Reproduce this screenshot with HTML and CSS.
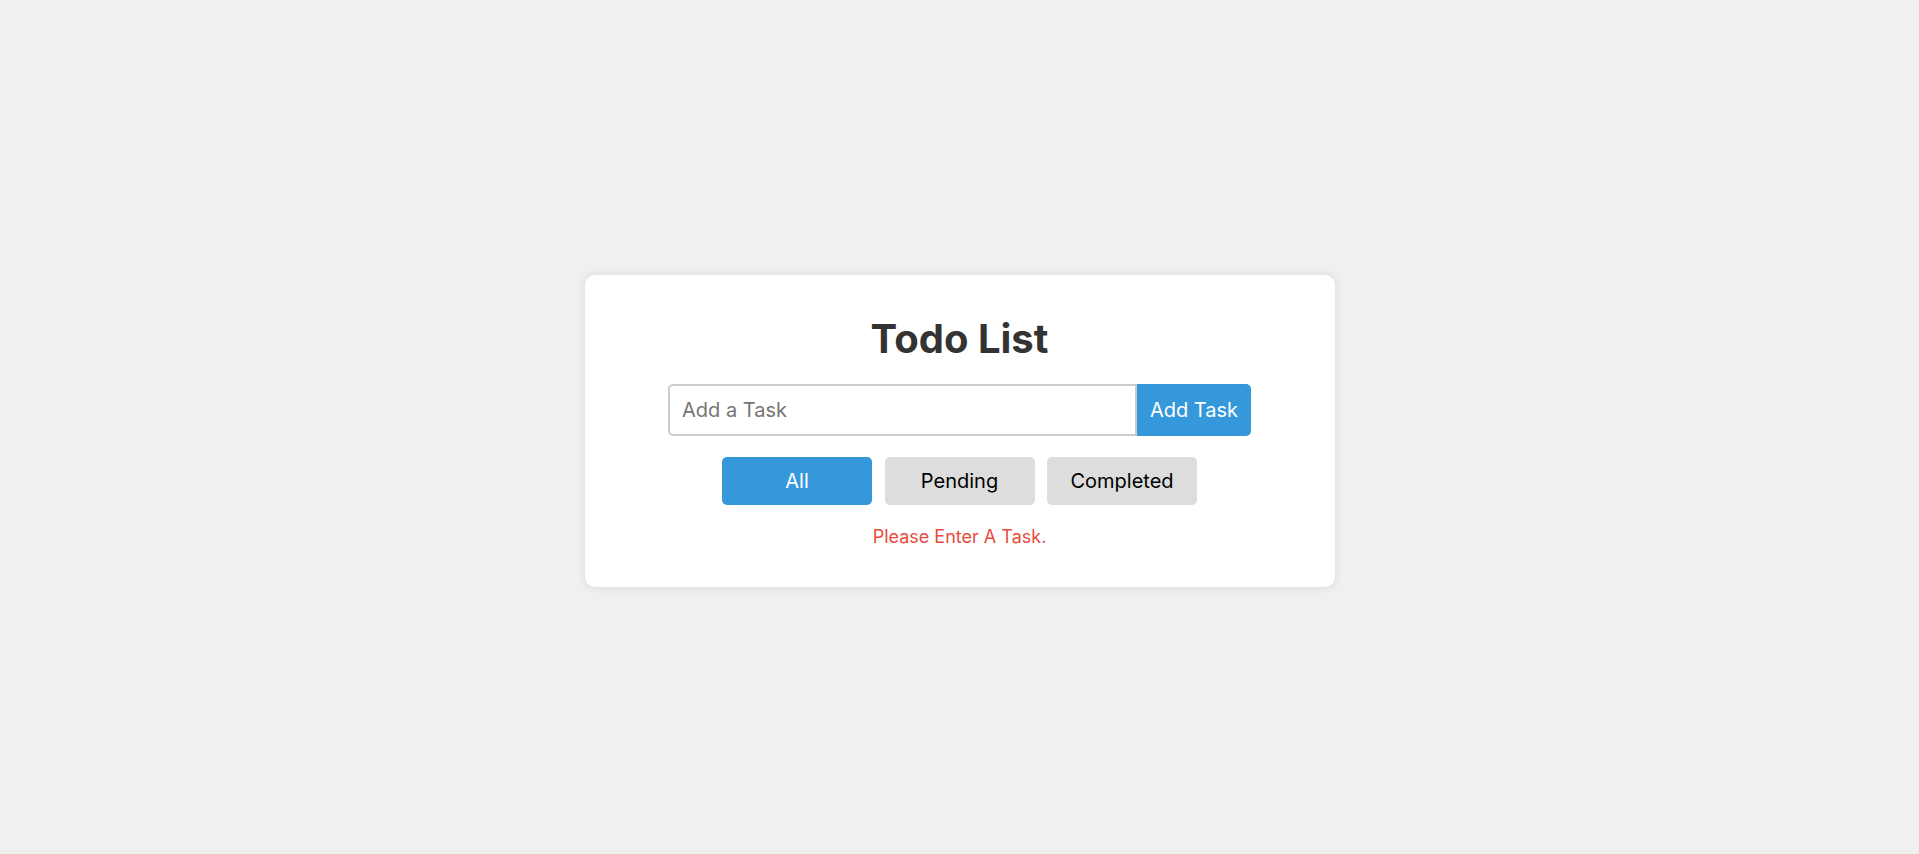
FILE: index.html
```html
<!DOCTYPE html>
<html lang="en">
<head>
<meta charset="UTF-8">
<title>Todo List</title>
<link rel="stylesheet" href="styles.css">
</head>
<body>
  <main class="card">
    <h1 class="title">Todo List</h1>
    <div class="input-row">
      <input class="task-input" type="text" placeholder="Add a Task">
      <button class="add-btn">Add Task</button>
    </div>
    <div class="filters">
      <button class="filter active">All</button>
      <button class="filter">Pending</button>
      <button class="filter">Completed</button>
    </div>
    <p class="error">Please Enter A Task.</p>
  </main>
</body>
</html>
```
FILE: styles.css
```css
* { box-sizing: border-box; }
html, body { margin: 0; padding: 0; }
body {
  background: #f0f0f0;
  font-family: Inter, "Noto Sans", sans-serif;
  min-height: 100vh;
  display: flex;
  justify-content: center;
  align-items: flex-start;
}
.card {
  width: 750px;
  margin-top: 275px;
  background: #fff;
  border-radius: 10px;
  box-shadow: 0 0 10px rgba(0, 0, 0, 0.1);
  padding: 40px 30px 38px;
  text-align: center;
}
.title {
  margin: 0 0 21px;
  font-size: 40px;
  font-weight: 700;
  color: #333;
  line-height: 48px;
}
.input-row {
  display: flex;
  justify-content: center;
}
.task-input {
  width: 469px;
  height: 52px;
  border: 2px solid #ccc;
  border-radius: 5px 0 0 5px;
  padding: 0 12px;
  font-family: inherit;
  font-size: 20px;
  color: #333;
  outline: none;
}
.task-input::placeholder { color: #757575; }
.add-btn {
  width: 114px;
  height: 52px;
  border: none;
  border-radius: 0 5px 5px 0;
  background: #3498db;
  color: #fff;
  font-family: inherit;
  font-size: 20px;
  padding: 0;
}
.filters {
  display: flex;
  justify-content: center;
  gap: 12.5px;
  margin-top: 21px;
}
.filter {
  width: 150px;
  height: 48px;
  border: none;
  border-radius: 5px;
  background: #ddd;
  color: #000;
  font-family: inherit;
  font-size: 20px;
  padding: 0;
}
.filter.active {
  background: #3498db;
  color: #fff;
}
.error {
  margin: 20px 0 0;
  color: #e74c3c;
  font-size: 18px;
  line-height: 24px;
}
```
